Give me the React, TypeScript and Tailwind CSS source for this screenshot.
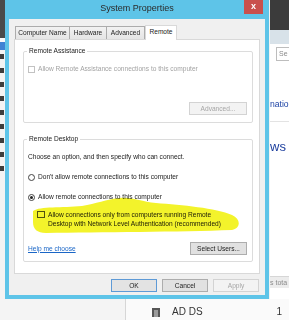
import React from "react";

const FONT = "font-['Liberation_Sans',Arial,sans-serif]";

function Tab({ label, width, selected }: { label: string; width: string; selected?: boolean }) {
  if (selected) {
    return (
      <div
        className={`relative z-10 -mb-px flex h-[15px] items-center justify-center border border-b-0 border-[#d9d9d9] bg-white ${width}`}
      >
        <span className="-mt-[2px]">{label}</span>
      </div>
    );
  }
  return (
    <div
      className={`flex h-[13px] items-center justify-center border border-b-0 border-[#acacac] bg-gradient-to-b from-[#f2f2f2] to-[#e5e5e5] ${width}`}
    >
      {label}
    </div>
  );
}

function Button({
  label,
  width,
  disabled,
  primary,
}: {
  label: string;
  width: string;
  disabled?: boolean;
  primary?: boolean;
}) {
  return (
    <div
      className={
        "flex h-[13px] items-center justify-center border " +
        width +
        " " +
        (disabled
          ? "border-[#d3d3d3] bg-[#f3f3f3] text-[#a6a6a6]"
          : primary
          ? "border-[#5e9ad6] bg-[#e3e3e3] text-[#222]"
          : "border-[#adadad] bg-[#e1e1e1] text-[#222]")
      }
    >
      {label}
    </div>
  );
}

function GroupBox({
  title,
  className,
  children,
}: {
  title: string;
  className: string;
  children: React.ReactNode;
}) {
  return (
    <div className={`relative flex flex-col rounded-[2px] border border-[#dcdcdc] ${className}`}>
      <span className="absolute -top-[5px] left-[3px] bg-white px-[2px] leading-[8px] text-[#222]">
        {title}
      </span>
      {children}
    </div>
  );
}

function Radio({ checked }: { checked?: boolean }) {
  return (
    <span className="flex h-[7px] w-[7px] items-center justify-center rounded-full border border-[#444] bg-white">
      {checked && <span className="h-[3px] w-[3px] rounded-full bg-[#222]" />}
    </span>
  );
}

function Dialog() {
  return (
    <div
      className={`absolute left-[5px] top-0 flex h-[299px] w-[264px] flex-col bg-[#5ec4e8] px-[4px] pb-[4px] ${FONT}`}
    >
      <div className="relative flex h-[19px] items-center justify-center">
        <span className="-mt-[1px] text-[9px] text-[#2a2a2a]">System Properties</span>
        <div className="absolute right-[2px] top-0 flex h-[14px] w-[19px] items-center justify-center bg-[#c9504d] text-[9px] font-bold text-white">
          x
        </div>
      </div>

      <div className="flex flex-1 flex-col bg-[#f0f0f0] px-[5px] pt-[5px] text-[6.6px] text-[#222]">
        <div className="flex h-[15px] items-end pl-[1px]">
          <Tab label="Computer Name" width="w-[55px]" />
          <Tab label="Hardware" width="w-[37px] border-l-0" />
          <Tab label="Advanced" width="w-[38px] border-l-0" />
          <Tab label="Remote" width="w-[32px]" selected />
        </div>

        <div className="flex h-[235px] flex-col border border-[#d9d9d9] bg-white pl-[8px] pr-[6px]">
          <GroupBox title="Remote Assistance" className="mt-[11px] h-[72px] pt-[13px]">
            <div className="flex h-[8px] items-center gap-[3px] pl-[4px] text-[#a3a3a3]">
              <span className="h-[7px] w-[7px] border border-[#c2c2c2] bg-white" />
              <span>Allow Remote Assistance connections to this computer</span>
            </div>
            <div className="mt-auto mb-[7px] mr-[5px] self-end">
              <Button label="Advanced..." width="w-[58px]" disabled />
            </div>
          </GroupBox>

          <GroupBox title="Remote Desktop" className="mt-[16px] h-[123px] pl-[4px] pt-[13px]">
            <div className="h-[8px] leading-[8px]">Choose an option, and then specify who can connect.</div>
            <div className="mt-[12px] flex h-[8px] items-center gap-[3px]">
              <Radio />
              <span>Don&apos;t allow remote connections to this computer</span>
            </div>
            <div className="mt-[12px] flex h-[8px] items-center gap-[3px]">
              <Radio checked />
              <span>Allow remote connections to this computer</span>
            </div>
            <div className="mt-[9px] flex gap-[3px] pl-[9px]">
              <span className="mt-[1px] h-[7px] w-[8px] shrink-0 border border-[#555]" />
              <span className="leading-[9px]">
                Allow connections only from computers running Remote
                <br />
                Desktop with Network Level Authentication (recommended)
              </span>
            </div>
            <div className="mt-auto mb-[6px] mr-[5px] flex items-center justify-between">
              <span className="text-[#1a66c7] underline">Help me choose</span>
              <Button label="Select Users..." width="w-[57px]" />
            </div>
          </GroupBox>
        </div>

        <div className="mt-[5px] flex justify-end gap-[5px] pr-[1px]">
          <Button label="OK" width="w-[46px]" primary />
          <Button label="Cancel" width="w-[46px]" />
          <Button label="Apply" width="w-[46px]" disabled />
        </div>
      </div>
    </div>
  );
}

export default function App() {
  return (
    <div className={`relative h-[320px] w-[289px] overflow-hidden bg-[#f3f3f3] ${FONT}`}>
      <div className="flex h-[299px]">
        <div className="flex w-[5px] flex-col">
          <div className="h-[38px] bg-[#4a4a4a]" />
          <div className="h-[4px] bg-[#fafafa]" />
          <div className="h-[8px] bg-[#3f83d4]" />
          <div className="flex flex-col gap-[9px] pt-[4px]">
            {[0, 1, 2, 3, 4, 5, 6, 7, 8].map((i) => (
              <div key={i} className="h-[5px] w-[4px] bg-[#3d3d3d]" />
            ))}
          </div>
        </div>
        <div className="flex-1" />
        <div className="flex w-[19px] flex-col bg-white">
          <div className="h-[30px] bg-[#3b3b3b]" />
          <div className="h-[14px] bg-[#d8e2e9]" />
          <div className="ml-[6px] mt-[3px] h-[14px] w-[20px] border border-[#bdbdbd] pl-[2px] text-[7px] leading-[12px] text-[#8a8a8a]">
            Se
          </div>
          <div className="mt-[37px] whitespace-nowrap text-[8.6px] leading-[12px] text-[#1f45a6]">
            natio
          </div>
          <div className="mt-[11px] border-b border-[#e3e3e3]" />
          <div className="mt-[17px] whitespace-nowrap text-[13px] leading-[16px] text-[#1d3f9e]">
            ws S
          </div>
          <div className="mt-[121px] h-[12px] whitespace-nowrap border-t border-[#d6d6d6] bg-[#ececec] text-[7px] leading-[11px] text-[#8a8a8a]">
            s tota
          </div>
        </div>
      </div>

      <div className="flex h-[21px]">
        <div className="w-[126px] border-r border-[#d6d6d6] bg-[#f4f4f4]" />
        <div className="flex flex-1 items-end bg-[#fafafa] pb-[2px] text-[10px] leading-[12px] text-[#333]">
          <span className="ml-[26px] mb-[1px] h-[9px] w-[8px] border-x-2 border-t-2 border-[#555] bg-[#9a9a9a]" />
          <span className="ml-[12px]">AD DS</span>
          <span className="ml-auto mr-[7px]">1</span>
        </div>
      </div>

      <Dialog />

      <svg
        className="pointer-events-none absolute left-0 top-0 mix-blend-multiply"
        width="289"
        height="320"
        viewBox="0 0 289 320"
      >
        <path
          d="M33 211 C40 206 62 208 82 206 C96 204 106 199 120 198 C134 197 141 202 156 203 C182 205 216 208 232 215 C241 219 241 228 232 230 C180 232 100 232 46 233 C37 233 33 229 33 222 Z"
          fill="#f3f32b"
        />
      </svg>
    </div>
  );
}
